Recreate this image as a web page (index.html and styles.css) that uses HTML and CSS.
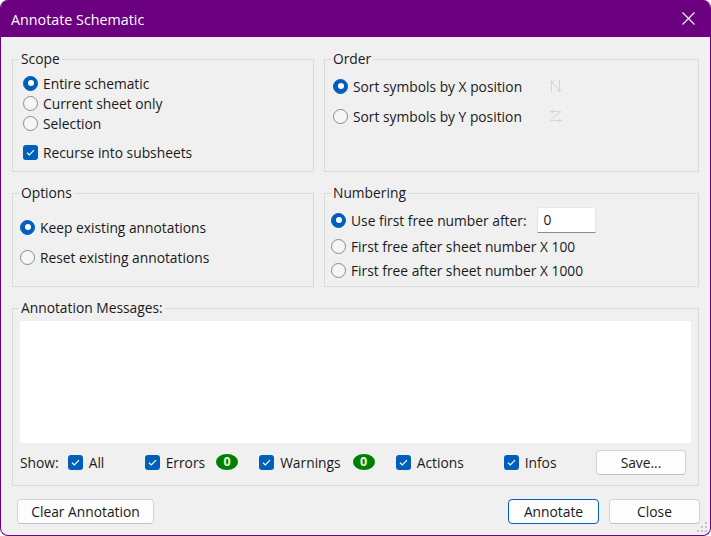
FILE: index.html
```html
<!DOCTYPE html>
<html>
<head>
<meta charset="utf-8">
<link rel="stylesheet" href="styles.css">
</head>
<body>
<div class="window">
  <div class="titlebar">
    <span class="title">Annotate Schematic</span>
    <svg class="close" width="13" height="13" viewBox="0 0 13 13"><path d="M0.5 0.5 L12.5 12.5 M12.5 0.5 L0.5 12.5" stroke="#ffffff" stroke-width="1.1" fill="none"/></svg>
  </div>
  <div class="content">
    <div class="grid">
      <fieldset class="group">
        <legend>Scope</legend>
        <div class="body scope">
          <div class="opt"><span class="radio on"></span><span>Entire schematic</span></div>
          <div class="opt"><span class="radio"></span><span>Current sheet only</span></div>
          <div class="opt"><span class="radio"></span><span>Selection</span></div>
          <div class="opt recurse"><span class="check"><svg width="15" height="15" viewBox="0 0 15 15"><path d="M4 7.8 L6.3 10 L11 5.2" stroke="#fff" stroke-width="1.2" fill="none"/></svg></span><span>Recurse into subsheets</span></div>
        </div>
      </fieldset>
      <fieldset class="group">
        <legend>Order</legend>
        <div class="body order">
          <div class="opt"><span class="radio on"></span><span class="sortlabel">Sort symbols by X position</span>
            <svg class="sorticon" width="16" height="16" viewBox="0 0 16 16"><path d="M3.5 14.5 V3 M3.5 3 C5 6 9 9 11.5 12.5 M11.5 13.5 V2 M2 5 L3.5 2.5 L5 5 M10 11.5 L11.5 14 L13 11.5" stroke="#d4d4d4" stroke-width="1" fill="none"/></svg>
          </div>
          <div class="opt second"><span class="radio"></span><span class="sortlabel">Sort symbols by Y position</span>
            <svg class="sorticon" width="16" height="16" viewBox="0 0 16 16"><path d="M2.5 3.5 H13 M13 3.5 C10 5.5 6 8 3 11.5 M2.5 12.5 H13.5 M5 2 L2.5 3.5 L5 5 M11 11 L13.5 12.5 L11 14" stroke="#d4d4d4" stroke-width="1" fill="none"/></svg>
          </div>
        </div>
      </fieldset>
      <fieldset class="group">
        <legend>Options</legend>
        <div class="body options">
          <div class="opt"><span class="radio on"></span><span>Keep existing annotations</span></div>
          <div class="opt second"><span class="radio"></span><span>Reset existing annotations</span></div>
        </div>
      </fieldset>
      <fieldset class="group">
        <legend>Numbering</legend>
        <div class="body numbering">
          <div class="opt first-num"><span class="radio on"></span><span>Use first free number after:</span><span class="numinput">0</span></div>
          <div class="opt num2"><span class="radio"></span><span>First free after sheet number X 100</span></div>
          <div class="opt num3"><span class="radio"></span><span>First free after sheet number X 1000</span></div>
        </div>
      </fieldset>
    </div>
    <fieldset class="group messages">
      <legend>Annotation Messages:</legend>
      <div class="body msgbody">
        <div class="msgbox"></div>
        <div class="showrow">
          <span class="showlbl">Show:</span>
          <span class="citem w-all"><span class="check"><svg width="15" height="15" viewBox="0 0 15 15"><path d="M4 7.8 L6.3 10 L11 5.2" stroke="#fff" stroke-width="1.2" fill="none"/></svg></span><span>All</span></span>
          <span class="citem"><span class="check"><svg width="15" height="15" viewBox="0 0 15 15"><path d="M4 7.8 L6.3 10 L11 5.2" stroke="#fff" stroke-width="1.2" fill="none"/></svg></span><span>Errors</span></span>
          <span class="badge b-err">0</span>
          <span class="citem"><span class="check"><svg width="15" height="15" viewBox="0 0 15 15"><path d="M4 7.8 L6.3 10 L11 5.2" stroke="#fff" stroke-width="1.2" fill="none"/></svg></span><span>Warnings</span></span>
          <span class="badge b-warn">0</span>
          <span class="citem w-act"><span class="check"><svg width="15" height="15" viewBox="0 0 15 15"><path d="M4 7.8 L6.3 10 L11 5.2" stroke="#fff" stroke-width="1.2" fill="none"/></svg></span><span>Actions</span></span>
          <span class="citem"><span class="check"><svg width="15" height="15" viewBox="0 0 15 15"><path d="M4 7.8 L6.3 10 L11 5.2" stroke="#fff" stroke-width="1.2" fill="none"/></svg></span><span>Infos</span></span>
          <span class="btn save">Save...</span>
        </div>
      </div>
    </fieldset>
    <div class="buttons">
      <span class="btn clear">Clear Annotation</span>
      <span class="spacer"></span>
      <span class="btn default">Annotate</span>
      <span class="btn closebtn">Close</span>
    </div>
  </div>
  <svg class="grip" width="11" height="11" viewBox="0 0 11 11">
    <rect x="8" y="0" width="2" height="2" fill="#c4c4c4"/>
    <rect x="4" y="4" width="2" height="2" fill="#c4c4c4"/>
    <rect x="8" y="4" width="2" height="2" fill="#c4c4c4"/>
    <rect x="0" y="8" width="2" height="2" fill="#c4c4c4"/>
    <rect x="4" y="8" width="2" height="2" fill="#c4c4c4"/>
    <rect x="8" y="8" width="2" height="2" fill="#c4c4c4"/>
  </svg>
</div>
</body>
</html>
```
FILE: styles.css
```css
* { box-sizing: border-box; }
html, body { margin: 0; padding: 0; background: #ffffff; }
body {
  font-family: "Open Sans", "Liberation Sans", sans-serif;
  font-size: 13.8px;
  color: #1a1a1a;
}
.window {
  position: relative;
  width: 711px;
  height: 536px;
  border: 1px solid #6b0080;
  border-top: 0;
  border-radius: 8px;
  background: #f0f0f0;
  overflow: hidden;
}
.titlebar {
  height: 37px;
  background: #6b0080;
  display: flex;
  align-items: center;
  padding: 0 16px 0 11px;
  margin: 0 -1px;
}
.title {
  color: #ffffff;
  font-size: 14.3px;
  flex: 1;
  padding-top: 1px;
}
.close { display: block; }
.content {
  padding: 12px 11px 0 11px;
}
.grid {
  display: grid;
  grid-template-columns: 302px 375px;
  column-gap: 10px;
  row-gap: 11px;
}
.group {
  margin: 0;
  border: 1px solid #dadada;
  padding: 0;
  min-width: 0;
}
.group legend {
  padding: 0 2px;
  margin-left: 6px;
  line-height: 20px;
  height: 20px;
}
.opt {
  display: flex;
  align-items: center;
  height: 20px;
  white-space: nowrap;
}
.radio {
  width: 15px;
  height: 15px;
  border-radius: 50%;
  border: 1px solid #8a8a8a;
  background: #f6f6f6;
  margin-right: 5px;
  flex: none;
  position: relative;
}
.radio.on {
  background: #005fb8;
  border-color: #005fb8;
}
.radio.on::after {
  content: "";
  position: absolute;
  left: 3.5px;
  top: 3.5px;
  width: 6px;
  height: 6px;
  border-radius: 50%;
  background: #ffffff;
}
.check {
  width: 15px;
  height: 15px;
  border-radius: 3px;
  background: #005fb8;
  margin-right: 5px;
  flex: none;
  display: block;
}
.check svg { display: block; }
.scope { padding: 4px 10px 9px 10px; }
.scope .recurse { margin-top: 9px; }
.order { padding: 7px 8px 0 8px; }
.order .second { margin-top: 10px; }
.sortlabel { width: 195px; }
.sorticon { display: block; }
.options { padding: 14px 7px 19px 7px; }
.options .second { margin-top: 10px; }
.numbering { padding: 4px 6px 0 6px; }
.first-num { height: 26px; }
.num2 { margin-top: 3px; }
.num3 { margin-top: 4px; }
.numinput {
  margin-left: 10px;
  width: 59px;
  height: 26px;
  background: #ffffff;
  border: 1px solid #e6e6e6;
  border-bottom: 1px solid #8a8a8a;
  border-radius: 3px 3px 0 0;
  padding-left: 6px;
  line-height: 23px;
}
.messages {
  margin-top: 11px;
}
.msgbody { padding: 3px 7px 11px 7px; }
.msgbox {
  height: 122px;
  background: #ffffff;
}
.showrow {
  margin-top: 7px;
  height: 24px;
  display: flex;
  align-items: center;
  white-space: nowrap;
}
.showlbl { margin-right: 9px; }
.citem { display: flex; align-items: center; }
.citem .check { margin-right: 6px; }
.w-all { width: 77px; }
.w-act { width: 108px; }
.badge {
  width: 22px;
  height: 16px;
  border-radius: 50%;
  background: #008000;
  color: #f2ffd8;
  font-weight: bold;
  font-size: 12.5px;
  line-height: 16px;
  text-align: center;
}
.b-err { margin-left: 11px; margin-right: 21px; }
.b-warn { margin-left: 12px; margin-right: 21px; }
.btn {
  display: flex;
  align-items: center;
  justify-content: center;
  background: #fdfdfd;
  border: 1px solid #d3d3d3;
  border-bottom-color: #c2c2c2;
  border-radius: 4px;
  color: #1a1a1a;
}
.save {
  margin-left: auto;
  margin-right: 5px;
  width: 90px;
  height: 25px;
}
.buttons {
  display: flex;
  margin-top: 13px;
  height: 25px;
  padding-left: 5px;
}
.buttons .btn { height: 25px; }
.clear { width: 137px; }
.spacer { flex: 1; }
.default { width: 91px; border: 1px solid #005fb8; }
.closebtn { width: 91px; margin-left: 10px; margin-right: -1px; }
.grip {
  position: absolute;
  right: 2px;
  bottom: 2px;
}
```
